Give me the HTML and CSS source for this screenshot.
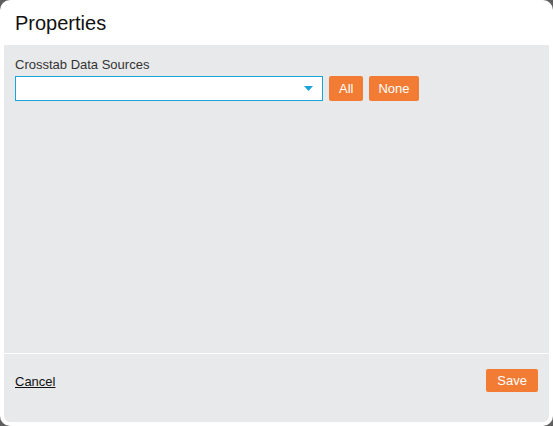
FILE: index.html
```html
<!DOCTYPE html>
<html>
<head>
<meta charset="utf-8">
<link rel="stylesheet" href="styles.css">
</head>
<body>
<div class="dialog">
  <div class="header"><h1 class="title">Properties</h1></div>
  <div class="panel">
    <div class="content">
      <div class="label">Crosstab Data Sources</div>
      <div class="row">
        <div class="combo">
          <svg class="arrow" width="9" height="5" viewBox="0 0 9 5"><path d="M0 0 H9 L4.5 5 Z" fill="#1aa3dc"/></svg>
        </div>
        <button class="btn btn-all">All</button>
        <button class="btn btn-none">None</button>
      </div>
    </div>
    <div class="footer">
      <a class="cancel" href="#">Cancel</a>
      <button class="btn btn-save">Save</button>
    </div>
  </div>
</div>
</body>
</html>
```

FILE: styles.css
```css
html, body {
  margin: 0;
  padding: 0;
  background: #5e5e5e;
}
body {
  width: 553px;
  height: 426px;
  font-family: "Liberation Sans", Arial, sans-serif;
}
.dialog {
  width: 553px;
  height: 426px;
  background: #ffffff;
  border-radius: 10px;
  display: flex;
  flex-direction: column;
  box-sizing: border-box;
  padding: 0 4px 4px 4px;
}
.header {
  height: 45px;
  flex: none;
  padding-left: 11px;
}
.title {
  margin: 0;
  font-size: 20px;
  font-weight: normal;
  line-height: 46px;
  color: #111111;
}
.panel {
  flex: 1;
  background: #e8e9eb;
  border-radius: 0 0 6px 6px;
  display: flex;
  flex-direction: column;
}
.content {
  height: 309px;
  box-sizing: border-box;
  padding: 12px 11px;
  border-bottom: 1px solid #ffffff;
}
.label {
  font-size: 13px;
  line-height: 15px;
  color: #333333;
  margin-bottom: 4px;
}
.row {
  display: flex;
  align-items: center;
  gap: 6px;
}
.combo {
  width: 308px;
  height: 25px;
  box-sizing: border-box;
  border: 1px solid #19a4dc;
  background: #ffffff;
  position: relative;
}
.arrow {
  position: absolute;
  right: 9px;
  top: 9px;
}
.btn {
  border: none;
  background: #f27c34;
  color: #ffffff;
  font-family: "Liberation Sans", Arial, sans-serif;
  font-size: 13px;
  height: 25px;
  border-radius: 2px;
  padding: 0 9px;
  margin: 0;
  cursor: pointer;
}
.btn-all {
  padding: 0 10px;
}
.footer {
  flex: 1;
  display: flex;
  justify-content: space-between;
  align-items: flex-start;
  padding: 15px 11px 0 11px;
}
.cancel {
  font-size: 13px;
  color: #111111;
  text-decoration: underline;
  line-height: 15px;
  margin-top: 5px;
}
.btn-save {
  height: 23px;
  padding: 0 11px;
}
```
